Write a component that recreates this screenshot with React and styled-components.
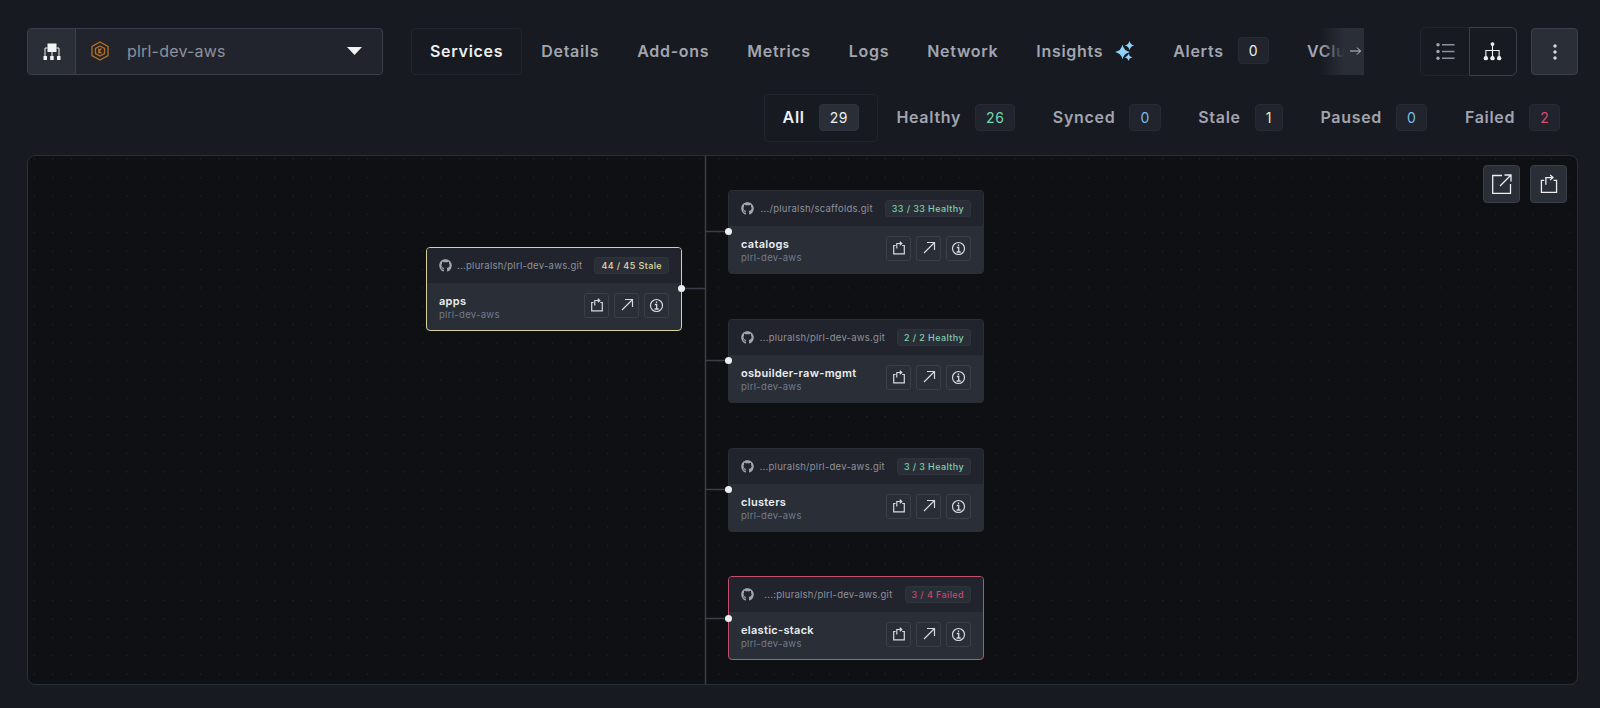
import React from "react";
import styled, { createGlobalStyle } from "styled-components";
import { FaGithub } from "react-icons/fa";

const Global = createGlobalStyle`
  html, body { margin: 0; padding: 0; height: 100%; background: #171a21; }
  #root { height: 100%; }
  * { box-sizing: border-box; }
`;

const Page = styled.div`
  width: 1600px; height: 708px; overflow: hidden;
  padding: 28px 22px 23px 27px;
  display: flex; flex-direction: column;
  background: #171a21;
  font-family: Inter, "Noto Sans", sans-serif;
  color: #a1a5b0;
`;
const TopBar = styled.div`
  display: flex; align-items: center; height: 47px; flex: none;
`;
const Select = styled.div`
  width: 356px; height: 47px; flex: none; display: flex;
  background: #21242c; border: 1px solid #3b3f4a; border-radius: 4px; overflow: hidden;
`;
const SelectIcon = styled.div`
  width: 48px; flex: none; display: flex; align-items: center; justify-content: center;
  background: #2a2e37; border-right: 1px solid #3b3f4a;
`;
const SelectBody = styled.div`
  flex: 1; display: flex; align-items: center; padding: 0 20px 2px 15px;
`;
const SelectLabel = styled.span`
  margin-left: 18px; flex: 1; font-size: 16px; color: #8d919c; letter-spacing: 0.2px;
`;
const TabsClip = styled.div`
  position: relative; margin-left: 28px; margin-right: 56px; flex: 1; min-width: 0; height: 47px; overflow: hidden;
  display: flex;
`;
const Tab = styled.div`
  flex: none; display: flex; align-items: center; gap: ${p => p.$gap || 14}px; height: 47px; padding: 0 18px 2px;
  border: 1px solid ${p => (p.$active ? "#21242c" : "transparent")};
  border-radius: 4px;
  font-size: 16px; font-weight: 600; letter-spacing: 0.7px;
  color: ${p => (p.$active ? "#ebeff0" : "#a1a5b0")};
`;
const Fade = styled.div`
  position: absolute; right: 0; top: 0; bottom: 0; width: 44px;
  display: flex; align-items: center; justify-content: flex-end; padding: 0 2px 2px 0;
  background: linear-gradient(90deg, rgba(42,46,55,0), #2a2e37 55%);
`;
const Count = styled.span`
  display: inline-flex; align-items: center; justify-content: center;
  height: 27px; padding: 0 10px; border-radius: 4px;
  background: ${p => (p.$strong ? "#2a2e37" : "#21242c")};
  border: 1px solid ${p => (p.$strong ? "#2f333d" : "#262a32")};
  font-size: 14px; font-weight: 400; letter-spacing: 0.5px;
  color: ${p => p.$color || "#ebeff0"};
`;
const Toggle = styled.div`
  display: flex; flex: none; width: 97px; height: 49px; border: 1px solid #21242c; border-radius: 6px; position: relative;
`;
const ToggleItem = styled.div`
  flex: 1; display: flex; align-items: center; justify-content: center;
  margin: ${p => (p.$active ? "-1px" : "0")};
  border: 1px solid ${p => (p.$active ? "#3b3f4a" : "transparent")};
  border-radius: ${p => (p.$active ? "0 6px 6px 0" : "0")};
`;
const Kebab = styled.div`
  width: 47px; height: 47px; margin-left: 14px; flex: none;
  background: #2a2e37; border: 1px solid #3b3f4a; border-radius: 4px;
  display: flex; align-items: center; justify-content: center;
`;
const FilterRow = styled.div`
  display: flex; justify-content: flex-end; height: 48px; flex: none; margin: 19px -1px 0 0;
`;
const Filter = styled(Tab)`
  height: 48px; padding: 0 17.75px 2px; color: ${p => (p.$active ? "#ebeff0" : "#a1a5b0")};
`;
const Canvas = styled.div`
  position: relative; flex: 1; margin-top: 13px; overflow: hidden;
  border: 1px solid #2a2e37; border-radius: 8px;
  background-color: #0f1014;
  background-image: radial-gradient(circle, #23262d 0.8px, transparent 1px);
  background-size: 18.5px 18.4px;
  background-position: -3px -6px;
`;
const Edges = styled.svg`
  position: absolute; inset: 0; width: 100%; height: 100%;
`;
const CanvasActions = styled.div`
  position: absolute; top: 9px; right: 10px; display: flex; gap: 10px;
`;
const CanvasButton = styled.div`
  width: 37px; height: 38px; background: #2a2e37; border: 1px solid #3b3f4a; border-radius: 4px;
  display: flex; align-items: center; justify-content: center;
`;
const Node = styled.div`
  position: absolute; left: ${p => p.$x}px; top: ${p => p.$y}px; width: 256px; height: 84px;
  border-radius: 4px; overflow: hidden; display: flex; flex-direction: column;
  background: #2a2e37;
  border: 1px solid ${p => p.$border || "#2a2e37"};
`;
const Dot = styled.span`
  position: absolute; left: ${p => p.$x}px; top: ${p => p.$y}px; width: 7px; height: 7px;
  border-radius: 50%; background: #ebeff0;
`;
const NodeHead = styled.div`
  height: 35px; flex: none; display: flex; align-items: center; padding: 0 12px; background: #21242c;
  color: #a1a5b0;
`;
const Repo = styled.span`
  flex: 1; text-align: right; margin-right: 12px; font-size: 9.5px; letter-spacing: 0.25px; color: #8d919c; white-space: nowrap;
`;
const Health = styled.span`
  flex: none; height: 17px; padding: 0 6px; display: flex; align-items: center;
  background: #2a2e37; border: 1px solid #2f333d; border-radius: 3px;
  font-size: 9px; font-weight: 500; letter-spacing: 0.4px; color: ${p => p.$color};
  white-space: nowrap;
`;
const NodeBody = styled.div`
  flex: 1; display: flex; align-items: center; padding: 0 12px;
`;
const NodeText = styled.div`
  flex: 1; min-width: 0; display: flex; flex-direction: column; gap: 1px; padding-top: 1px;
`;
const NodeName = styled.span`
  font-size: 11px; font-weight: 600; letter-spacing: 0.3px; color: #ebeff0; line-height: 14px;
`;
const NodeSub = styled.span`
  font-size: 9.5px; letter-spacing: 0.3px; color: #747b8b; line-height: 12px;
`;
const NodeActions = styled.div`
  display: flex; gap: 5px; flex: none; margin-bottom: 3px;
`;
const IconButton = styled.div`
  width: 25px; height: 25px; border: 1px solid #3b3f4a; border-radius: 3px;
  display: flex; align-items: center; justify-content: center; color: #d6d9df;
`;

const ShareIcon = ({ size = 14, color = "#d6d9df", w = 1.2 }) => (
  <svg width={size} height={size} viewBox="0 0 14 14" fill="none" stroke={color} strokeWidth={w}>
    <path d="M3.600 4.500H1.700V12.800H12.300V4.500H10.200" />
    <path d="M4.800 7.500V2.500H9.600M7.800.7 9.800 2.500 7.800 4.300" />
  </svg>
);
const ArrowIcon = () => (
  <svg width="16" height="16" viewBox="0 0 16 16" fill="none" stroke="#d6d9df" strokeWidth="1.2">
    <path d="M3 13 13.500 2.500M6 2.500H13.500V10" />
  </svg>
);
const InfoIcon = () => (
  <svg width="15" height="15" viewBox="0 0 15 15" fill="none" stroke="#d6d9df" strokeWidth="1.200">
    <circle cx="7.500" cy="7.500" r="6" />
    <path d="M5.800 6.500H7.700V11M5.600 11H9.700M7.500 3.500V5" strokeWidth="1.300" />
  </svg>
);
const Hierarchy = () => (
  <svg width="18" height="18" viewBox="0 0 18 18" fill="none">
    <rect x="4.500" y="0.500" width="9" height="8.500" fill="#f2f3f5" />
    <path d="M9 9V14M2 5V14M16 5V14M2 5H4.500M13.500 5H16" stroke="#f2f3f5" />
    <rect x="0.500" y="13" width="3.500" height="4" fill="#f2f3f5" />
    <rect x="7.200" y="13" width="3.500" height="4" fill="#f2f3f5" />
    <rect x="14" y="13" width="3.500" height="4" fill="#f2f3f5" />
  </svg>
);
const ClusterLogo = () => (
  <svg width="18" height="20" viewBox="0 0 18 20" fill="none" stroke="#b5701f" strokeWidth="1.300">
    <path d="M9 1 17 5.500V14.500L9 19 1 14.500V5.500Z" />
    <path d="M9 5 13.500 7.500V12.500L9 15 4.500 12.500V7.500Z" />
    <path d="M7.800 7.500V12.500M10.500 7.500 8 10 10.500 12.500" />
  </svg>
);
const Caret = () => (
  <svg width="15" height="8" viewBox="0 0 15 8"><path d="M0 0H15L7.500 8Z" fill="#f2f3f5" /></svg>
);
const star = (cx, cy, r) => {
  const k = r * 0.16;
  return `M${cx} ${cy - r}Q${cx + k} ${cy - k} ${cx + r} ${cy}Q${cx + k} ${cy + k} ${cx} ${cy + r}Q${cx - k} ${cy + k} ${cx - r} ${cy}Q${cx - k} ${cy - k} ${cx} ${cy - r}Z`;
};
const Sparkles = () => (
  <svg width="20" height="20" viewBox="0 0 20 20" fill="#8fd3fb">
    <path d={star(7.500, 11, 7.500)} />
    <path d={star(14.500, 4.500, 4.800)} />
    <path d={star(13.500, 16.200, 4)} />
  </svg>
);
const ListIcon = () => (
  <svg width="19" height="17" viewBox="0 0 19 17" fill="none">
    <g fill="#a1a5b0"><circle cx="2" cy="1.700" r="1.700" /><circle cx="2" cy="8.500" r="1.700" /><circle cx="2" cy="15.300" r="1.700" /></g>
    <path d="M6 1.700H18.500M6 8.500H18.500M6 15.300H18.500" stroke="#8d919c" strokeWidth="1.500" />
  </svg>
);
const TreeIcon = () => (
  <svg width="19" height="19" viewBox="0 0 20 20" fill="none">
    <path d="M10 2V16M3 16V9H17V16" stroke="#ebeff0" strokeWidth="1.200" />
    <g fill="#ebeff0"><circle cx="10" cy="2.200" r="2" /><circle cx="3" cy="17" r="2.300" /><circle cx="10" cy="17" r="2.300" /><circle cx="17" cy="17" r="2.300" /></g>
  </svg>
);
const KebabIcon = () => (
  <svg width="4" height="16" viewBox="0 0 4 16" fill="#d6d9df">
    <circle cx="2" cy="2" r="1.700" /><circle cx="2" cy="8" r="1.700" /><circle cx="2" cy="14" r="1.700" />
  </svg>
);
const ExternalIcon = () => (
  <svg width="20" height="20" viewBox="0 0 20 20" fill="none" stroke="#ebeff0" strokeWidth="1.300">
    <path d="M10 1.500H.700V19.300H18.500V10M8 12 18.500 1.500M12.500 1H19V7.500" />
  </svg>
);

const C = { healthy: "#74d6ae", stale: "#f3ecb4", failed: "#dc4a70", blue: "#74bde8" };
const N = { healthy: "#7fd0b0", stale: "#e0daa8", failed: "#c94a6a" };

const tabs = ["Services", "Details", "Add-ons", "Metrics", "Logs", "Network"];
const filters = [
  { label: "All", n: 29, active: true },
  { label: "Healthy", n: 26, color: C.healthy },
  { label: "Synced", n: 0, color: C.blue },
  { label: "Stale", n: 1, color: C.stale },
  { label: "Paused", n: 0, color: C.blue },
  { label: "Failed", n: 2, color: C.failed },
];
const nodes = [
  { name: "apps", repo: "...pluralsh/plrl-dev-aws.git", status: "44 / 45 Stale", color: N.stale, x: 398, y: 91, border: "#d8d29a" },
  { name: "catalogs", repo: ".../pluralsh/scaffolds.git", status: "33 / 33 Healthy", color: N.healthy, x: 700, y: 34 },
  { name: "osbuilder-raw-mgmt", repo: "...pluralsh/plrl-dev-aws.git", status: "2 / 2 Healthy", color: N.healthy, x: 700, y: 163 },
  { name: "clusters", repo: "...pluralsh/plrl-dev-aws.git", status: "3 / 3 Healthy", color: N.healthy, x: 700, y: 292 },
  { name: "elastic-stack", repo: "...:pluralsh/plrl-dev-aws.git", status: "3 / 4 Failed", color: N.failed, x: 700, y: 420, border: "#c2506c" },
];

const FlowNode = ({ name, repo, status, color, x, y, border }) => (
  <Node $x={x} $y={y} $border={border}>
    <NodeHead>
      <FaGithub size={13} />
      <Repo>{repo}</Repo>
      <Health $color={color}>{status}</Health>
    </NodeHead>
    <NodeBody>
      <NodeText>
        <NodeName>{name}</NodeName>
        <NodeSub>plrl-dev-aws</NodeSub>
      </NodeText>
      <NodeActions>
        <IconButton><ShareIcon /></IconButton>
        <IconButton><ArrowIcon /></IconButton>
        <IconButton><InfoIcon /></IconButton>
      </NodeActions>
    </NodeBody>
  </Node>
);

export default function App() {
  return (
    <Page>
      <Global />
      <TopBar>
        <Select>
          <SelectIcon><Hierarchy /></SelectIcon>
          <SelectBody>
            <ClusterLogo />
            <SelectLabel>plrl-dev-aws</SelectLabel>
            <Caret />
          </SelectBody>
        </Select>
        <TabsClip>
          {tabs.map((t, i) => <Tab key={t} $active={i === 0}>{t}</Tab>)}
          <Tab $gap={12}>Insights <Sparkles /></Tab>
          <Tab>Alerts <Count>0</Count></Tab>
          <Tab>VCluster</Tab>
          <Fade>
            <svg width="12" height="10" viewBox="0 0 12 10" fill="none" stroke="#c5c9d3" strokeWidth="1">
              <path d="M0 5H10.500M7 1.500 10.500 5 7 8.500" />
            </svg>
          </Fade>
        </TabsClip>
        <Toggle>
          <ToggleItem><ListIcon /></ToggleItem>
          <ToggleItem $active><TreeIcon /></ToggleItem>
        </Toggle>
        <Kebab><KebabIcon /></Kebab>
      </TopBar>
      <FilterRow>
        {filters.map(f => (
          <Filter key={f.label} $active={f.active}>
            {f.label}
            <Count $strong={f.active} $color={f.color}>{f.n}</Count>
          </Filter>
        ))}
      </FilterRow>
      <Canvas>
        <Edges>
          <path d="M677.500 0V530M654 132.500H677.500M677.500 75.500H701M677.500 204.500H701M677.500 333.500H701M677.500 462.500H701" stroke="#3b3f4a" strokeWidth="1.500" fill="none" />
        </Edges>
        {nodes.map(n => <FlowNode key={n.name} {...n} />)}
        <Dot $x={650} $y={129} />
        <Dot $x={697} $y={72} />
        <Dot $x={697} $y={201} />
        <Dot $x={697} $y={330} />
        <Dot $x={697} $y={459} />
        <CanvasActions>
          <CanvasButton><ExternalIcon /></CanvasButton>
          <CanvasButton><ShareIcon size={20} color="#ebeff0" w={0.9} /></CanvasButton>
        </CanvasActions>
      </Canvas>
    </Page>
  );
}
